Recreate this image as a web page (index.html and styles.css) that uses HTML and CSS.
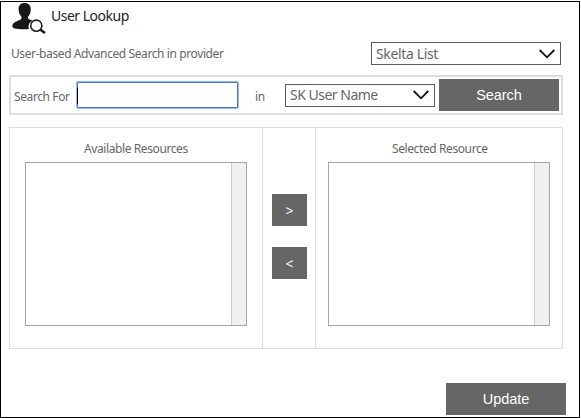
FILE: index.html
```html
<!DOCTYPE html>
<html lang="en">
<head>
<meta charset="utf-8">
<title>User Lookup</title>
<link rel="stylesheet" href="styles.css">
</head>
<body>
<main class="window">
  <header class="title-bar">
    <svg class="user-icon" viewBox="0 0 34 32" width="34" height="32">
      <path fill="#181818" d="M12.500 1C8.600 1 6.400 3.600 6.600 7.500c.1 3.300 1.300 5.600 2.800 7.200.3 1.800-.2 2.700-1.700 3.300C3.500 19.600.300 21 .300 24.300c0 1.700 2.200 2.400 6.200 2.800 4 .3 7 .3 10.500-.1-1.200-3.600.4-6.900 3.700-8.400-1.700-.9-3.800-.9-4.600-2.400-.3-.5-.2-1-.1-1.500 1.800-1.600 2.700-3.900 2.800-7.200C18.900 3.600 16.500 1 12.500 1z"/>
      <circle cx="24.300" cy="23.700" r="5.600" fill="#fff" stroke="#222" stroke-width="1.600"/>
      <path d="M28.500 27.700l4.500 3.300" stroke="#181818" stroke-width="2.400"/>
    </svg>
    <h1 class="title">User Lookup</h1>
  </header>
  <section class="provider">
    <span class="provider-label">User-based Advanced Search in provider</span>
    <div class="select select-provider"><span>Skelta List</span>
      <svg class="chevron" viewBox="0 0 16 10" width="16" height="10"><path d="M.7 1L8 8.300 15.300 1"/></svg></div>
  </section>
  <section class="search">
    <label class="search-label" for="query">Search For</label>
    <div class="query" id="query"><i class="caret"></i></div>
    <span class="in">in</span>
    <div class="select select-field"><span>SK User Name</span>
      <svg class="chevron" viewBox="0 0 16 10" width="16" height="10"><path d="M.7 1L8 8.300 15.300 1"/></svg></div>
    <button class="button search-button">Search</button>
  </section>
  <section class="resources">
    <div class="column">
      <h2 class="caption available">Available Resources</h2>
      <div class="list"><div class="track"></div></div>
    </div>
    <div class="moves">
      <button class="button move">&gt;</button>
      <button class="button move">&lt;</button>
    </div>
    <div class="column column-selected">
      <h2 class="caption selected">Selected Resource</h2>
      <div class="list"><div class="track"></div></div>
    </div>
  </section>
  <button class="button update">Update</button>
</main>
</body>
</html>
```
FILE: styles.css
```css
* { box-sizing: border-box; }
body { margin: 0; background: #fff; font-family: "Noto Sans", "Open Sans", sans-serif; font-size: 12px; letter-spacing: -.4px; color: #666; }
.window { width: 580px; height: 417px; margin-top: 1px; border: 1px solid #000; display: flex; flex-direction: column; padding-left: 8px; overflow: hidden; }
span, label, h1, h2 { white-space: nowrap; }
.title-bar { display: flex; height: 40px; padding-left: 3px; }
.user-icon { flex: none; }
.title { margin: 4px 0 0 5px; font-size: 14px; line-height: 20px; font-weight: 400; letter-spacing: -.5px; color: #222; }
.provider { display: flex; justify-content: space-between; width: 552px; height: 33px; padding-left: 2px; }
.provider-label { line-height: 24px; }
.select { display: flex; align-items: center; justify-content: space-between; height: 23px; border: 1px solid #5c5c5c; padding: 0 5px 0 4px; font-size: 14px; line-height: 20px; letter-spacing: -.5px; }
.select-provider { width: 190px; letter-spacing: -.35px; }
.select-field { width: 150px; margin-right: 4px; }
.chevron { flex: none; fill: none; stroke: #111; stroke-width: 1.800; }
.search { display: flex; align-items: center; width: 554px; height: 40px; border: 2px solid #ddd; padding-left: 3px; }
.search-label { width: 62px; padding-top: 3px; }
.query { width: 163px; height: 28px; border: 1px solid #8fbcf5; box-shadow: inset 0 0 0 1px #4a74c0; border-radius: 2px; padding: 6px 0 0; margin-bottom: 1px; }
.caret { display: block; width: 1px; height: 16px; background: #000; }
.in { width: 46px; padding: 3px 0 0 16px; }
.button { border: 0; padding: 0; background: #666; color: #fff; font: 14.500px "Liberation Sans", Arial, sans-serif; letter-spacing: -.05px; }
.search-button { width: 120px; height: 32px; }
.resources { display: flex; width: 554px; height: 222px; margin-top: 12px; border: 1px solid #ddd; }
.column { flex: none; width: 252px; padding: 12px 0 0 15px; }
.column-selected { padding-left: 12px; width: 246px; }
.caption { margin: 0 0 4px; font-size: 12px; line-height: 18px; font-weight: 400; }
.available { padding-left: 59px; }
.selected { padding-left: 64px; }
.list { display: flex; justify-content: flex-end; width: 222px; height: 164px; border: 1px solid #a5a5a5; }
.track { width: 15px; background: #f0f0f0; border-left: 1px solid #d0d0d0; }
.moves { flex: none; width: 54px; border: solid #ddd; border-width: 0 1px; padding: 66px 0 0 9px; display: flex; flex-direction: column; gap: 21px; }
.move { width: 35px; height: 32px; font: 14px "Noto Sans", sans-serif; }
.update { flex: none; width: 120px; height: 32px; margin: 34px 0 0 437px; }
```
